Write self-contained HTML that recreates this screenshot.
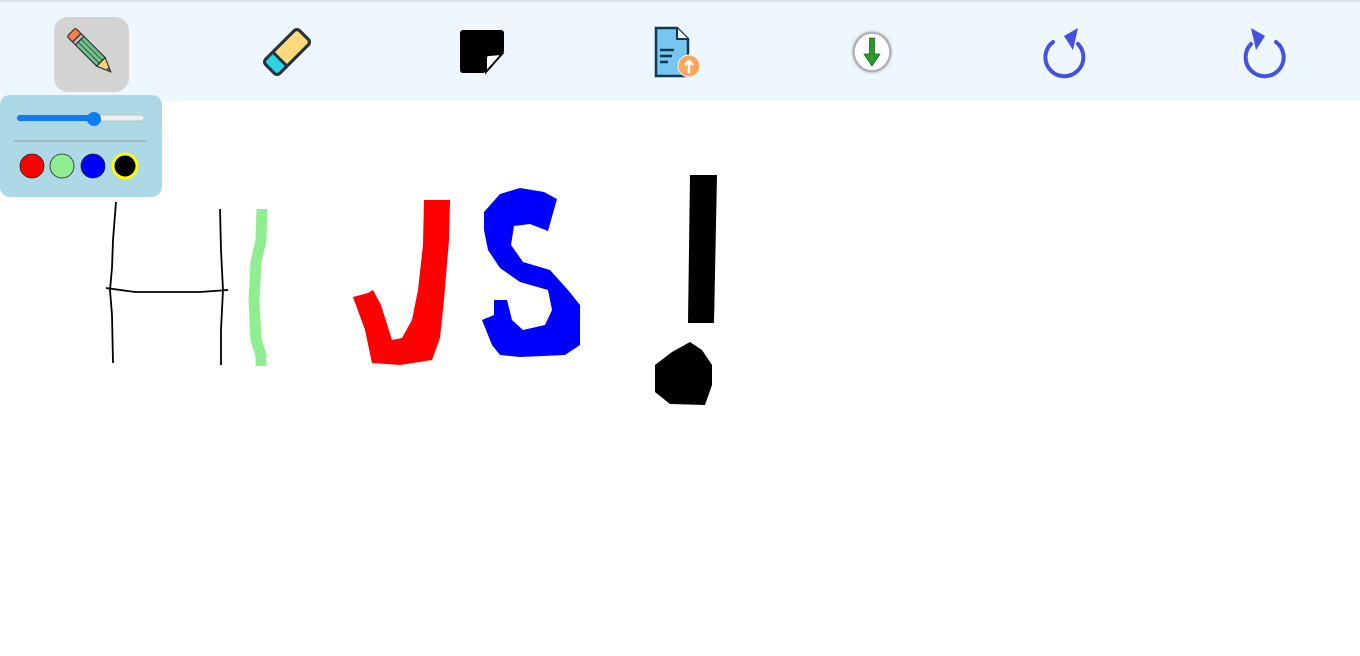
<!DOCTYPE html>
<html><head><style>
body{margin:0;width:1360px;height:656px;background:#fff;position:relative;overflow:hidden;font-family:"Liberation Sans",sans-serif}
#bar{position:absolute;left:0;top:0;width:1360px;height:101px;background:#eef6fe;border-top:2px solid #dde3e8;box-sizing:border-box}
.sel{position:absolute;left:54px;top:15px;width:75px;height:75px;background:#d3d3d3;border-radius:14px}
#panel{position:absolute;left:0;top:95px;width:162px;height:102px;background:#add8e6;border-radius:10px}
svg{position:absolute}
</style></head><body>
<div id="bar"><div class="sel"></div></div>
<svg width="1360" height="656" style="left:0;top:0">
<!-- pencil -->
<g transform="translate(91,52) rotate(-45)">
<rect x="-6" y="-28" width="12" height="8" rx="2" fill="#f08050" stroke="#333" stroke-width="1.2"/>
<rect x="-6" y="-20" width="12" height="4" fill="#bbb" stroke="#333" stroke-width="1.2"/>
<rect x="-6" y="-16" width="12" height="30" fill="#6cc48a" stroke="#333" stroke-width="1.2"/>
<line x1="-2" y1="-16" x2="-2" y2="14" stroke="#333" stroke-width="0.8"/><line x1="2" y1="-16" x2="2" y2="14" stroke="#333" stroke-width="0.8"/>
<path d="M-6 14 L6 14 L0 28 Z" fill="#fcd07a" stroke="#333" stroke-width="1.2"/>
<path d="M-2 23 L2 23 L0 28Z" fill="#555"/>
</g>
<!-- eraser -->
<g transform="translate(287,52) rotate(45)">
<rect x="-10" y="-24" width="20" height="48" rx="4" fill="#ffd97a" stroke="#23323e" stroke-width="3"/>
<path d="M-8.5 10 H8.5 V20 a3 3 0 0 1 -3 3 H-5.5 a3 3 0 0 1 -3 -3Z" fill="#2dd3e0"/>
<rect x="-10" y="-24" width="20" height="48" rx="4" fill="none" stroke="#23323e" stroke-width="3"/>
<line x1="-10" y1="10" x2="10" y2="10" stroke="#23323e" stroke-width="3"/>
</g>
<!-- note -->
<path d="M463 30 H501 a3 3 0 0 1 3 3 V52 L484 73 H463 a3 3 0 0 1 -3 -3 V33 a3 3 0 0 1 3 -3Z" fill="#000"/>
<path d="M502 54 L486 72 V58 a3 3 0 0 1 3 -3Z" fill="#fff" stroke="#000" stroke-width="2"/>
<!-- doc -->
<path d="M656 28 H677 L688 39 V76 H656Z" fill="#77c6ef" stroke="#0d3a52" stroke-width="2.5"/>
<path d="M677 28 V39 H688" fill="#fff" stroke="#0d3a52" stroke-width="2"/>
<path d="M660 50 H674 M660 56 H672 M660 62 H668" stroke="#0d3a52" stroke-width="2.5"/>
<circle cx="689" cy="66" r="11" fill="#fda55b" stroke="#eef6fe" stroke-width="1"/>
<path d="M689 73 V61 M685 65 L689 61 L693 65" stroke="#fff" stroke-width="2.5" fill="none"/>
<!-- download -->
<ellipse cx="872" cy="52" rx="18" ry="19" fill="#fff" stroke="#aaa" stroke-width="1.5" style="filter:drop-shadow(0 0 1.5px #777)"/>
<path d="M869.5 38 H874.5 V54 H880 L872 66 L864 54 H869.5Z" fill="#2a9a2a" stroke="#1b6a1b" stroke-width="0.8"/>
<!-- undo -->
<path d="M1053 42 A19 19 0 1 0 1078 44" fill="none" stroke="#4452e0" stroke-width="4" stroke-linecap="round"/>
<path d="M1078 28 L1064 36 L1073 50Z" fill="#4452e0"/>
<!-- redo -->
<path d="M1276 42 A19 19 0 1 1 1251 44" fill="none" stroke="#4452e0" stroke-width="4" stroke-linecap="round"/>
<path d="M1251 28 L1265 36 L1256 50Z" fill="#4452e0"/>

<!-- drawing -->
<path d="M116 202 L113 240 L112 268 L110 290 L112 315 L113 363" stroke="#000" stroke-width="1.8" fill="none"/>
<path d="M220 209 L221 250 L223 290 L221 330 L221 365" stroke="#000" stroke-width="1.8" fill="none"/>
<path d="M106 288 L135 292 L200 292 L228 290" stroke="#000" stroke-width="1.8" fill="none"/>
<path d="M262 209 L261 240 L256 262 L254 300 L256 340 L261 355 L261 366" stroke="#90ee90" stroke-width="11" fill="none"/>
<path d="M424 200 L450 200 L449 240 L444 300 L440 338 L432 360 L400 365 L372 363 L365 330 L353 297 L368 293 L373 290 L381 305 L392 340 L402 338 L412 320 L418 290 L423 245Z" fill="#f00"/>
<path d="M484 212 L500 194 L520 188 L544 192 L557 199 L548 231 L530 224 L514 226 L511 245 L523 262 L550 270 L568 290 L580 305 L580 345 L565 355 L520 357 L500 355 L492 345 L482 320 L494 315 L494 300 L507 300 L512 320 L523 330 L545 325 L552 310 L548 290 L520 282 L500 268 L488 250 L484 230Z" fill="#00f"/>
<path d="M690 175 L717 175 L714 323 L688 323Z" fill="#000"/>
<path d="M672 352 L690 342 L702 350 L712 365 L712 385 L705 405 L670 404 L655 392 L655 365Z" fill="#000"/>
</svg>
<div id="panel"></div>
<svg width="162" height="102" style="left:0;top:95px">
<rect x="17" y="20" width="127" height="6" rx="3" fill="#eee" stroke="#bbb" stroke-width="0.8"/>
<rect x="17" y="20" width="78" height="6" rx="3" fill="#0d7cf5"/>
<circle cx="94" cy="24" r="7" fill="#0d7cf5"/>
<line x1="14" y1="46" x2="147" y2="46" stroke="#999" stroke-width="1"/>
<circle cx="32" cy="71" r="12" fill="#f00" stroke="#222" stroke-width="0.8"/>
<circle cx="62" cy="71" r="12" fill="#90ee90" stroke="#222" stroke-width="0.8"/>
<circle cx="93" cy="71" r="12" fill="#00f" stroke="#222" stroke-width="0.8"/>
<circle cx="125" cy="71" r="12" fill="#000" stroke="#ff0" stroke-width="3"/>
</svg>
</body></html>
